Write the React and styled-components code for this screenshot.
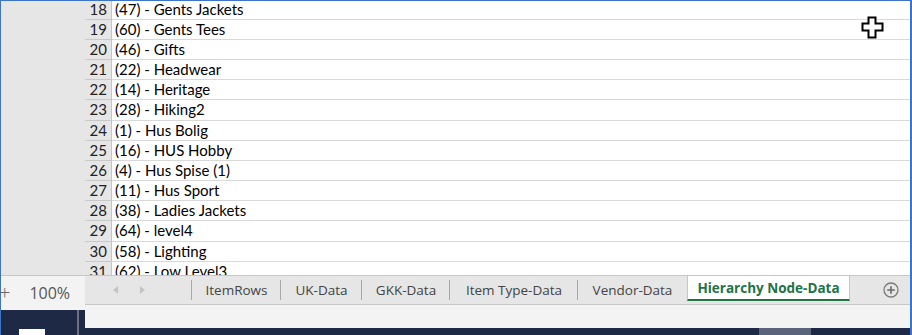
import React from "react";
import styled, { createGlobalStyle } from "styled-components";

// Global page reset

const GlobalStyle = createGlobalStyle`
  html, body {
    margin: 0;
    padding: 0;
    width: 912px;
    height: 335px;
    overflow: hidden;
    background: #ffffff;
  }
`;

// Styled components

const Window = styled.div`
  position: relative;
  width: 912px;
  height: 335px;
  box-sizing: border-box;
  border-top: 1px solid #3b74c8;
  border-left: 1px solid #3b74c8;
  border-right: 2px solid #3b74c8;
  display: flex;
  flex-direction: column;
  overflow: hidden;
  font-family: "Open Sans", "Noto Sans", sans-serif;
`;
const Sheet = styled.div`
  flex: 1;
  display: flex;
  min-height: 0;
  overflow: hidden;
`;
const Gutter = styled.div`
  width: 84px;
  flex-shrink: 0;
  background: #e6e6e6;
`;
const Grid = styled.div`
  flex: 1;
  display: flex;
  flex-direction: column;
  margin-top: -1px;
`;
const Row = styled.div`
  display: flex;
  height: ${(props) => props.h}px;
  flex-shrink: 0;
  border-bottom: 1px solid #d9d9d9;
`;
const RowHead = styled.div`
  width: 27px;
  flex-shrink: 0;
  box-sizing: border-box;
  background: #e6e6e6;
  border-right: 1px solid #c4c4c4;
  margin-bottom: -1px;
  border-bottom: 1px solid #c8c8c8;
  padding-right: 4px;
  text-align: right;
  font-family: Lato, "Open Sans", sans-serif;
  font-size: 15px;
  line-height: 19px;
  color: #222;
`;
const Cell = styled.div`
  flex: 1;
  padding-left: 3px;
  font-family: Lato, "Open Sans", sans-serif;
  font-size: 15px;
  line-height: 19px;
  color: #000;
  white-space: nowrap;
`;
const Bottom = styled.div`
  height: 60px;
  flex-shrink: 0;
  display: flex;
  border-top: 1px solid #c6c6c6;
  box-sizing: border-box;
`;
const ZoomPanel = styled.div`
  width: 84px;
  flex-shrink: 0;
  display: flex;
  flex-direction: column;
`;
const ZoomBox = styled.div`
  height: 34px;
  background: #f3f3f3;
  display: flex;
  align-items: center;
  gap: 19px;
  color: #555;
  font-size: 16px;
`;
const Plus = styled.span`
  font-size: 20px;
  font-weight: 300;
  color: #666;
  margin-left: -2px;
  margin-top: -1px;
`;
const Taskbar = styled.div`
  flex: 1;
  position: relative;
  background: #1e2a45;
`;
const TaskDivider = styled.div`
  position: absolute;
  left: 76px;
  top: 0;
  width: 2px;
  height: 100%;
  background: #6d7280;
`;
const TaskButton = styled.div`
  position: absolute;
  left: 18px;
  bottom: 0;
  width: 26px;
  height: 6px;
  background: #ffffff;
`;
const TabsPanel = styled.div`
  flex: 1;
  display: flex;
  flex-direction: column;
`;
const TabStrip = styled.div`
  height: 28px;
  background: #e6e6e6;
  border-bottom: 1px solid #c6c6c6;
  display: flex;
  align-items: stretch;
`;
const Nav = styled.div`
  width: 107px;
  display: flex;
  align-items: center;
  gap: 22px;
  padding-left: 28px;
  box-sizing: border-box;
  border-right: 1px solid #a8a8a8;
  margin: 4px 0;
`;
const Arrow = styled.span`
  width: 0;
  height: 0;
  border-top: 4px solid transparent;
  border-bottom: 4px solid transparent;
  ${(props) =>
    props.dir === "left"
      ? "border-right: 5px solid #c4c4c4;"
      : "border-left: 5px solid #c4c4c4;"}
`;
const Tab = styled.div`
  width: ${(props) => props.w}px;
  flex-shrink: 0;
  display: flex;
  align-items: center;
  justify-content: center;
  font-size: 13.5px;
  color: #444;
  white-space: nowrap;
  position: relative;
  &::after {
    content: "";
    position: absolute;
    right: 0;
    top: 4px;
    bottom: 4px;
    width: 1px;
    background: ${(props) => (props.last ? "transparent" : "#a8a8a8")};
  }
`;
const ActiveTab = styled.div`
  width: 163px;
  flex-shrink: 0;
  display: flex;
  align-items: center;
  justify-content: center;
  margin-top: -1px;
  height: 26px;
  background: #ffffff;
  border-left: 1px solid #c6c6c6;
  border-right: 1px solid #c6c6c6;
  border-top: 1px solid #c6c6c6;
  border-bottom: 2px solid #217346;
  box-sizing: border-box;
  font-size: 13.5px;
  font-weight: 700;
  color: #217346;
  white-space: nowrap;
`;
const AddSheet = styled.div`
  margin-left: auto;
  width: 26px;
  display: flex;
  align-items: center;
  justify-content: center;
  margin-right: 6px;
`;
const StatusStrip = styled.div`
  height: 23px;
  background: #f3f3f3;
`;
const BottomBar = styled.div`
  flex: 1;
  position: relative;
  background: #1e2a45;
`;
const ScrollThumb = styled.div`
  position: absolute;
  left: 674px;
  top: 0;
  width: 52px;
  height: 100%;
  background: #596379;
`;
const Cursor = styled.svg`
  position: absolute;
  left: 859px;
  top: 15px;
`;

const rows = [
  [18, "(47) - Gents Jackets"],
  [19, "(60) - Gents Tees"],
  [20, "(46) - Gifts"],
  [21, "(22) - Headwear"],
  [22, "(14) - Heritage"],
  [23, "(28) - Hiking2"],
  [24, "(1) - Hus Bolig"],
  [25, "(16) - HUS Hobby"],
  [26, "(4) - Hus Spise (1)"],
  [27, "(11) - Hus Sport"],
  [28, "(38) - Ladies Jackets"],
  [29, "(64) - level4"],
  [30, "(58) - Lighting"],
  [31, "(62) - Low Level3"],
];

const tabs = [
  ["ItemRows", 89],
  ["UK-Data", 81],
  ["GKK-Data", 88],
  ["Item Type-Data", 128],
  ["Vendor-Data", 109],
];

export default function App() {
  return (
    <>
      <GlobalStyle />
      <Window>
        <Sheet>
          <Gutter />
          <Grid>
            {rows.map(([n, label], i) => (
              <Row key={n} h={i % 6 === 5 ? 20 : 19}>
                <RowHead>{n}</RowHead>
                <Cell>{label}</Cell>
              </Row>
            ))}
          </Grid>
        </Sheet>
        <Bottom>
          <ZoomPanel>
            <ZoomBox>
              <Plus>+</Plus>
              <span>100%</span>
            </ZoomBox>
            <Taskbar>
              <TaskDivider />
              <TaskButton />
            </Taskbar>
          </ZoomPanel>
          <TabsPanel>
            <TabStrip>
              <Nav>
                <Arrow dir="left" />
                <Arrow dir="right" />
              </Nav>
              {tabs.map(([t, w], i) => (
                <Tab key={t} w={w} last={i === tabs.length - 1}>
                  {t}
                </Tab>
              ))}
              <ActiveTab>Hierarchy Node-Data</ActiveTab>
              <AddSheet>
                <svg width="16" height="16" viewBox="0 0 16 16">
                  <circle cx="8" cy="8" r="7" fill="none" stroke="#7a7a7a" strokeWidth="1.3" />
                  <path d="M8 4.2v7.6M4.2 8h7.6" stroke="#6a6a6a" strokeWidth="1.6" />
                </svg>
              </AddSheet>
            </TabStrip>
            <StatusStrip />
            <BottomBar>
              <ScrollThumb />
            </BottomBar>
          </TabsPanel>
        </Bottom>
        <Cursor width="26" height="24" viewBox="0 0 26 24">
          <path
            d="M8.5 1.5h7v6h7v7h-7v7h-7v-7h-6v-7h6z"
            fill="#ffffff"
            stroke="#000000"
            strokeWidth="2"
            strokeLinejoin="miter"
          />
        </Cursor>
      </Window>
    </>
  );
}
